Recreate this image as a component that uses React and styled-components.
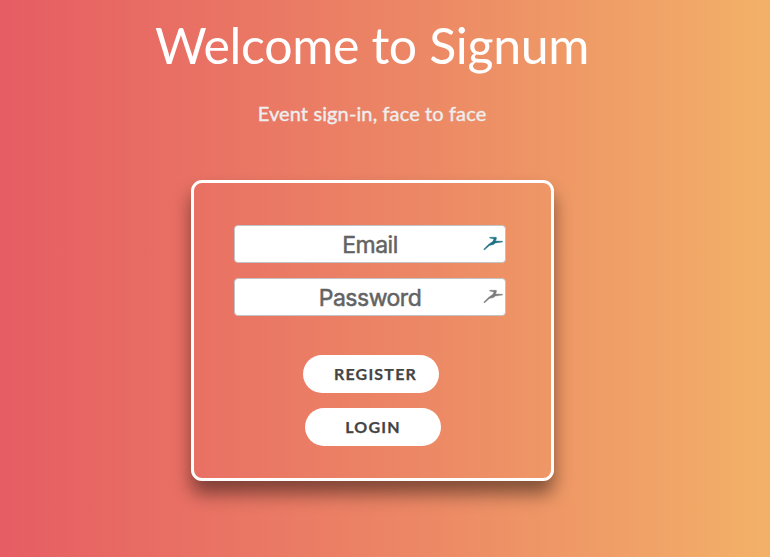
import React from 'react';
import styled, { createGlobalStyle } from 'styled-components';

const GlobalStyle = createGlobalStyle`
  *, *::before, *::after { box-sizing: border-box; }
  body { margin: 0; overflow: hidden; }
`;

const Page = styled.main`
  display: flex;
  flex-direction: column;
  align-items: center;
  width: 100%;
  height: 557px;
  padding: 15px 26px 0 0;
  background: linear-gradient(90deg, #e65d63 0%, #ec8765 54%, #f3b168 100%);
  font-family: Lato, sans-serif;
`;

const Title = styled.h1`
  margin: 0;
  color: #fff;
  font-size: 50px;
  font-weight: 400;
  line-height: 60px;
  letter-spacing: -0.35px;
  white-space: nowrap;
`;

const Tagline = styled.p`
  margin: 26px 0 0;
  color: #eee;
  font-size: 20px;
  font-weight: 400;
  line-height: 24px;
  letter-spacing: 0.12px;
  -webkit-text-stroke: 0.4px #eee;
  white-space: nowrap;
`;

const Card = styled.form`
  display: flex;
  flex-direction: column;
  align-items: center;
  width: 363px;
  height: 301px;
  margin-top: 55px;
  padding: 42px 4px 0 0;
  border: 3px solid #fff;
  border-radius: 11px;
  box-shadow: 0 13px 18px rgba(0, 0, 0, 0.45);
`;

const Field = styled.label`
  display: flex;
  align-items: center;
  position: relative;
  width: 272px;
  height: 38px;
  margin-bottom: 15px;
  border: 1px solid #c3c3c3;
  border-radius: 4px;
  background: #fff;
`;

const Input = styled.input`
  width: 100%;
  height: 100%;
  padding: 2px 0 0;
  border: 0;
  outline: 0;
  background: transparent;
  font-family: Inter, sans-serif;
  font-size: 23px;
  letter-spacing: -0.5px;
  text-align: center;
  &::placeholder { color: #636363; opacity: 1; -webkit-text-stroke: 0.5px #636363; }
`;

const FieldIcon = styled.svg`
  position: absolute;
  top: 10px;
  right: 2px;
  width: 20px;
  height: 15px;
  fill: ${(p) => p.$color};
  stroke: ${(p) => p.$color};
  stroke-width: 0.35px;
`;

const Actions = styled.div`
  display: flex;
  flex-direction: column;
  gap: 15px;
  margin: 24px 0 0 4px;
`;

const Button = styled.button`
  width: 136px;
  height: 38px;
  margin: 0 0 0 ${(p) => p.$shift || '0'};
  padding: 0 0 0 ${(p) => p.$inset || '0'};
  border: 0;
  border-radius: 19px;
  background: #fff;
  color: #444;
  font: 700 16px/38px Lato, sans-serif;
  letter-spacing: 1.2px;
  -webkit-text-stroke: 0.25px #444;
`;

function Runner({ color }) {
  return (
    <FieldIcon $color={color} viewBox="0 0 20 15" aria-hidden="true">
      <path d="M6.7 1.3L13.2 1.2L13.6 2.2L12.9 4.2L12.3 5L19.5 5.2V6.1L12.4 7L10.6 8.5L6.5 9.4L1.4 14L.7 13.2L5.4 8.4L9.6 5.6L11 3.1L6.6 2.1Z" />
    </FieldIcon>
  );
}

export default function App() {
  return (
    <>
      <GlobalStyle />
      <Page>
        <Title>Welcome to Signum</Title>
        <Tagline>Event sign-in, face to face</Tagline>
        <Card>
          <Field>
            <Input type="email" placeholder="Email" />
            <Runner color="#1e7183" />
          </Field>
          <Field>
            <Input type="password" placeholder="Password" />
            <Runner color="#7b7b7b" />
          </Field>
          <Actions>
            <Button type="button" $inset="9px">REGISTER</Button>
            <Button type="button" $shift="2px">LOGIN</Button>
          </Actions>
        </Card>
      </Page>
    </>
  );
}
